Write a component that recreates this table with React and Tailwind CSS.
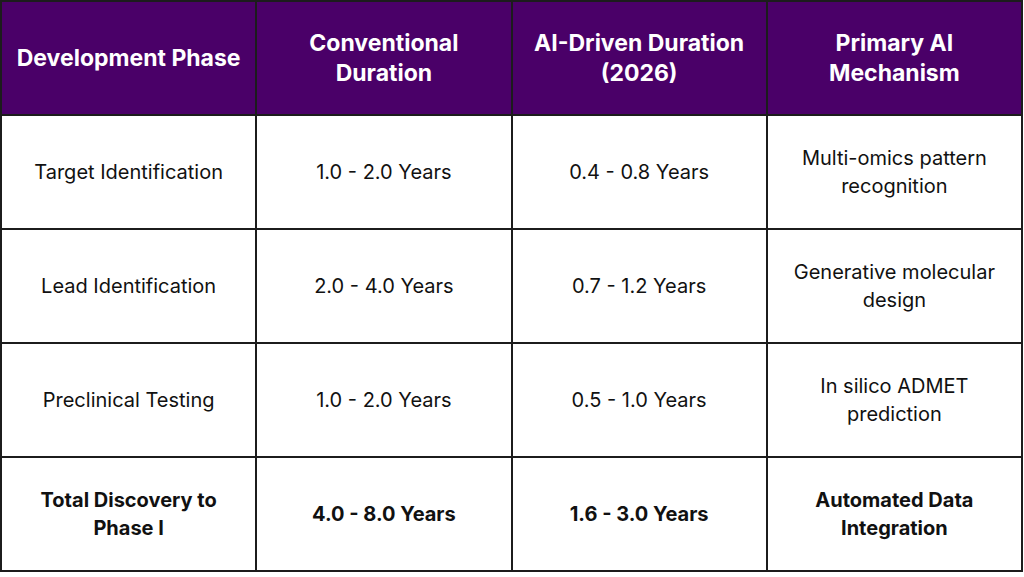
const headers = ["Development Phase", "Conventional Duration", "AI-Driven Duration (2026)", "Primary AI Mechanism"];

const rows = [
  ["Target Identification", "1.0 - 2.0 Years", "0.4 - 0.8 Years", "Multi-omics pattern recognition"],
  ["Lead Identification", "2.0 - 4.0 Years", "0.7 - 1.2 Years", "Generative molecular design"],
  ["Preclinical Testing", "1.0 - 2.0 Years", "0.5 - 1.0 Years", "In silico ADMET prediction"],
];

const total = ["Total Discovery to Phase I", "4.0 - 8.0 Years", "1.6 - 3.0 Years", "Automated Data Integration"];

export default function App() {
  return (
    <div className="min-h-screen bg-white" style={{ fontFamily: "Inter, 'Noto Sans', sans-serif" }}>
      <div className="grid grid-cols-4 w-[1023px] border-l-2 border-t-2 border-[#1c1c1c]">
        {headers.map((h) => (
          <div
            key={h}
            className="h-[114px] flex items-center justify-center px-2 text-center bg-[#4a0068] text-white font-bold text-[23px] leading-[30px] border-r-2 border-b-2 border-[#1c1c1c]"
          >
            {h}
          </div>
        ))}
        {rows.map((r) =>
          r.map((c, i) => (
            <div
              key={r[0] + i}
              className="h-[114px] flex items-center justify-center px-6 text-center text-[#111] text-[20px] leading-[28px] border-r-2 border-b-2 border-[#1c1c1c]"
            >
              {c}
            </div>
          ))
        )}
        {total.map((c) => (
          <div
            key={c}
            className="h-[114px] flex items-center justify-center px-8 text-center text-[#111] font-bold text-[20px] leading-[28px] border-r-2 border-b-2 border-[#1c1c1c]"
          >
            {c}
          </div>
        ))}
      </div>
    </div>
  );
}
